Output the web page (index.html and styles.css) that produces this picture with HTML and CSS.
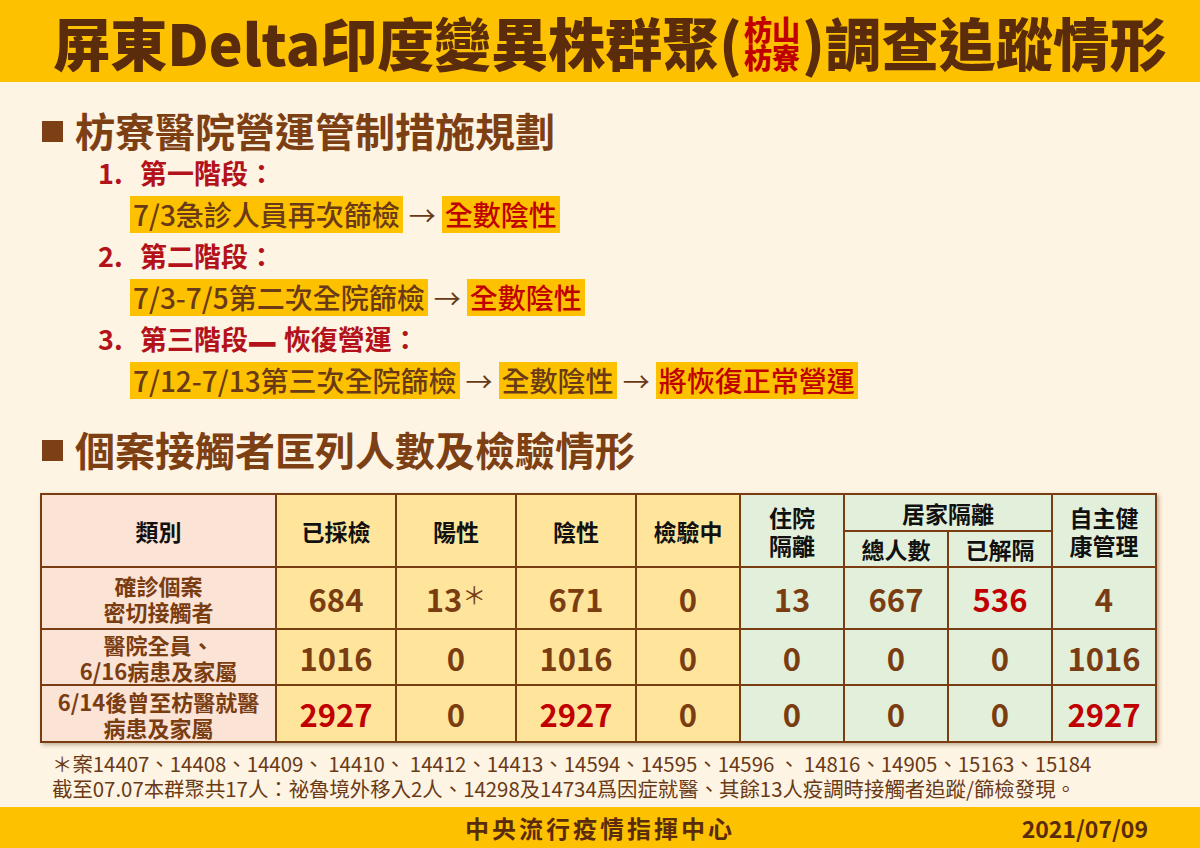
FILE: index.html
```html
<!DOCTYPE html>
<html lang="zh-Hant">
<head>
<meta charset="utf-8">
<title>屏東Delta印度變異株群聚調查追蹤情形</title>
<link rel="stylesheet" href="styles.css">
</head>
<body>
<header class="title-bar">
  <h1 class="title">屏東Delta印度變異株群聚<span class="paren">(</span><span class="stack"><span>枋山</span><span>枋寮</span></span><span class="paren">)</span>調查追蹤情形</h1>
</header>
<main class="content">
  <h2 class="sec-title"><span class="sq"></span>枋寮醫院營運管制措施規劃</h2>
  <div class="stages">
    <div class="stage"><span class="num">1.</span>第一階段：</div>
    <div class="flow"><span class="hl">7/3急診人員再次篩檢</span><span class="arrow">→</span><span class="hl red">全數陰性</span></div>
    <div class="stage"><span class="num">2.</span>第二階段：</div>
    <div class="flow"><span class="hl">7/3-7/5第二次全院篩檢</span><span class="arrow">→</span><span class="hl red">全數陰性</span></div>
    <div class="stage"><span class="num">3.</span>第三階段<span class="dash">—</span> 恢復營運：</div>
    <div class="flow"><span class="hl">7/12-7/13第三次全院篩檢</span><span class="arrow">→</span><span class="hl">全數陰性</span><span class="arrow">→</span><span class="hl red">將恢復正常營運</span></div>
  </div>
  <h2 class="sec-title sec2"><span class="sq"></span>個案接觸者匡列人數及檢驗情形</h2>
  <table class="data">
    <colgroup>
      <col class="c-cat"><col class="c-n"><col class="c-n"><col class="c-n"><col class="c-m">
      <col class="c-m"><col class="c-m"><col class="c-m"><col class="c-m">
    </colgroup>
    <thead>
      <tr class="h1">
        <th rowspan="2" class="pink">類別</th>
        <th rowspan="2" class="yel">已採檢</th>
        <th rowspan="2" class="yel">陽性</th>
        <th rowspan="2" class="yel">陰性</th>
        <th rowspan="2" class="yel">檢驗中</th>
        <th rowspan="2" class="grn">住院<br>隔離</th>
        <th colspan="2" class="grn">居家隔離</th>
        <th rowspan="2" class="grn">自主健<br>康管理</th>
      </tr>
      <tr class="h2">
        <th class="grn">總人數</th>
        <th class="grn">已解隔</th>
      </tr>
    </thead>
    <tbody>
      <tr class="r1">
        <td class="pink lbl">確診個案<br>密切接觸者</td>
        <td class="yel">684</td>
        <td class="yel">13<span class="ast">＊</span></td>
        <td class="yel">671</td>
        <td class="yel">0</td>
        <td class="grn">13</td>
        <td class="grn">667</td>
        <td class="grn hot">536</td>
        <td class="grn">4</td>
      </tr>
      <tr class="r2">
        <td class="pink lbl">醫院全員、<br>6/16病患及家屬</td>
        <td class="yel">1016</td>
        <td class="yel">0</td>
        <td class="yel">1016</td>
        <td class="yel">0</td>
        <td class="grn">0</td>
        <td class="grn">0</td>
        <td class="grn">0</td>
        <td class="grn">1016</td>
      </tr>
      <tr class="r3">
        <td class="pink lbl">6/14後曾至枋醫就醫<br>病患及家屬</td>
        <td class="yel hot">2927</td>
        <td class="yel">0</td>
        <td class="yel hot">2927</td>
        <td class="yel">0</td>
        <td class="grn">0</td>
        <td class="grn">0</td>
        <td class="grn">0</td>
        <td class="grn hot">2927</td>
      </tr>
    </tbody>
  </table>
  <div class="notes">
    <p>＊案14407、14408、14409、 14410、 14412、14413、14594、14595、14596 、 14816、14905、15163、15184</p>
    <p>截至07.07本群聚共17人：祕魯境外移入2人、14298及14734爲因症就醫、其餘13人疫調時接觸者追蹤/篩檢發現。</p>
  </div>
</main>
<footer class="foot">
  <span class="org">中央流行疫情指揮中心</span>
  <span class="date">2021/07/09</span>
</footer>
</body>
</html>
```

FILE: styles.css
```css
* { box-sizing: border-box; }
html, body { margin: 0; padding: 0; }
body {
  width: 1200px;
  height: 848px;
  background: #fdf4e3;
  font-family: "Noto Sans CJK TC", "Noto Sans", sans-serif;
  display: flex;
  flex-direction: column;
  overflow: hidden;
}
.title-bar {
  background: #fdc100;
  height: 82px;
  padding-left: 20px;
  display: flex;
  align-items: center;
  justify-content: center;
}
.title {
  margin: 0;
  font-size: 57px;
  font-weight: 900;
  color: #5a2c0c;
  line-height: 1;
  display: flex;
  align-items: center;
  white-space: nowrap;
}
.paren { font-weight: 900; }
.stack {
  display: flex;
  flex-direction: column;
  color: #c00000;
  font-size: 28px;
  line-height: 28px;
  font-weight: 900;
  margin: 4px 2px 0;
}
.content {
  flex: 1;
  padding: 0 0 0 42px;
}
.sec-title {
  margin: 25px 0 0;
  font-size: 40px;
  line-height: 46px;
  font-weight: 700;
  color: #7d3f14;
  display: flex;
  align-items: center;
}
.sq {
  display: inline-block;
  width: 21px;
  height: 21px;
  background: #7d3f14;
  margin-right: 12px;
  margin-top: 2px;
}
.stages {
  margin: 4px 0 0 56px;
  display: flex;
  flex-direction: column;
  gap: 6px;
}
.stage {
  font-size: 27px;
  line-height: 32px;
  font-weight: 700;
  color: #b3121b;
}
.stage .num { display: inline-block; width: 42px; }
.dash {
  display: inline-block;
  font-weight: 900;
  transform: scale(1.2, 1.6);
  margin: 0 3px 0 2px;
}
.flow {
  margin-left: 32px;
  display: flex;
  align-items: center;
}
.hl {
  background: #fdc100;
  height: 37px;
  line-height: 37px;
  padding: 0 3px;
  font-size: 28px;
  color: #6a3a17;
  font-weight: 500;
}
.hl.red { color: #c00000; }
.arrow {
  font-size: 27px;
  color: #6a3a17;
  margin: 0 6px;
}
.sec2 { margin-top: 26px; }
.data {
  margin-top: 21px;
  margin-left: -2px;
  border-collapse: collapse;
  table-layout: fixed;
  width: 1116px;
  box-shadow: 2px 2px 4px rgba(90, 50, 10, 0.35);
}
.c-cat { width: 235px; }
.c-n { width: 120px; }
.c-m { width: 104px; }
.data th, .data td {
  border: 2px solid #7a3d12;
  text-align: center;
  vertical-align: middle;
  padding: 0;
}
.data th {
  color: #111;
  font-size: 23px;
  font-weight: 700;
  line-height: 28px;
}
.h1 { height: 37px; }
.h2 { height: 36px; }
.r1 { height: 62px; }
.r2 { height: 56px; }
.r3 { height: 57px; }
.pink { background: #fbe3d5; }
.yel { background: #fee59b; }
.grn { background: #e2efda; }
.data td {
  color: #7a3d12;
  font-size: 31px;
  font-weight: 700;
}
.data td.lbl {
  font-size: 22px;
  line-height: 26px;
}
.data td.hot { color: #c00000; }
.ast {
  font-weight: 400;
  font-size: 24px;
  vertical-align: 8px;
}
.notes {
  margin: 8px 0 0 10px;
  color: #6a3a17;
  font-size: 20.4px;
  line-height: 25px;
}
.notes p { margin: 0; white-space: nowrap; }
.foot {
  height: 41px;
  background: #fdc100;
  display: flex;
  align-items: center;
  justify-content: center;
  position: relative;
  color: #5a2c0c;
  font-weight: 700;
}
.org { font-size: 24px; letter-spacing: 3px; }
.date {
  position: absolute;
  right: 52px;
  font-size: 23px;
}
```
